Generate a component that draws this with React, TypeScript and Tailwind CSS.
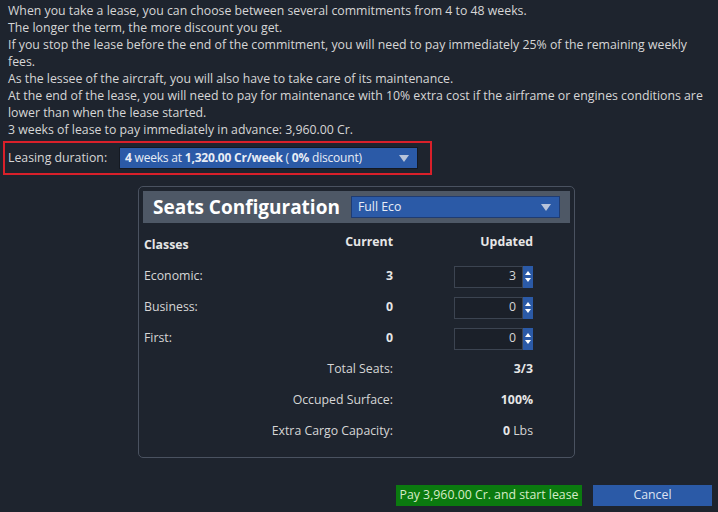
import React from "react";

const font = { fontFamily: '"Open Sans", "Noto Sans", sans-serif' };

const Arrow = () => (
  <svg width="10" height="7" viewBox="0 0 10 7" className="shrink-0">
    <path d="M0 0 L10 0 L5 7 Z" fill="#b8c4da" />
  </svg>
);

const Spinner = () => (
  <div className="flex h-full w-[10px] flex-col items-center justify-center gap-[3px] bg-[#2b5aa7]">
    <svg width="6" height="4" viewBox="0 0 6 4">
      <path d="M0 4 L6 4 L3 0 Z" fill="#ffffff" />
    </svg>
    <svg width="6" height="4" viewBox="0 0 6 4">
      <path d="M0 0 L6 0 L3 4 Z" fill="#ffffff" />
    </svg>
  </div>
);

interface SeatRowProps {
  label: string;
  current: number;
  updated: number;
}

const SeatRow: React.FC<SeatRowProps> = ({ label, current, updated }) => (
  <div className="grid h-[31px] grid-cols-[249px_61px_79px] items-center">
    <div className="flex items-center justify-between">
      <span>{label}</span>
      <span className="font-bold text-[#e6e6e6]">{current}</span>
    </div>
    <div />
    <div className="flex h-[22px] items-stretch">
      <div className="flex flex-1 items-center justify-end border border-[#3c4451] bg-[#1b2029] pr-[6px]">
        {updated}
      </div>
      <Spinner />
    </div>
  </div>
);

const SummaryRow: React.FC<{ label: string; value: React.ReactNode }> = ({ label, value }) => (
  <div className="grid h-[31px] grid-cols-[249px_61px_79px] items-center">
    <div className="text-right">{label}</div>
    <div />
    <div className="text-right">{value}</div>
  </div>
);

export default function App() {
  return (
    <div
      className="flex h-[512px] w-[718px] flex-col overflow-hidden bg-[#1e242e] text-[12.3px] text-[#d6d6d6]"
      style={font}
    >
      <div className="pl-2 pr-2 pt-[2px] leading-[17px]">
        <p>When you take a lease, you can choose between several commitments from 4 to 48 weeks.</p>
        <p>The longer the term, the more discount you get.</p>
        <p>
          If you stop the lease before the end of the commitment, you will need to pay immediately 25% of the remaining weekly
          fees.
        </p>
        <p>As the lessee of the aircraft, you will also have to take care of its maintenance.</p>
        <p>
          At the end of the lease, you will need to pay for maintenance with 10% extra cost if the airframe or engines conditions are
          lower than when the lease started.
        </p>
        <p>3 weeks of lease to pay immediately in advance: 3,960.00 Cr.</p>
      </div>

      <div className="ml-[3px] mt-[3px] flex h-[34px] w-[429px] items-center border-2 border-[#d9202a] pl-[3px]">
        <span className="w-[111px]">Leasing duration:</span>
        <div className="flex h-[22px] w-[299px] items-center justify-between border border-[#141922] bg-[#2b5aa7] pl-[5px] pr-[8px] text-[12px] tracking-[-0.2px] text-[#e8edf6]">
          <span>
            <b>4</b> weeks at <b>1,320.00 Cr/week</b> ( <b>0%</b> discount)
          </span>
          <Arrow />
        </div>
      </div>

      <div className="ml-[138px] mt-[11px] flex h-[272px] w-[437px] flex-col rounded-[5px] border border-[#4a5260] px-[4px] pt-[4px]">
        <div className="flex h-[32px] items-center bg-[#4e5866] pl-[10px] pr-[10px]">
          <span className="text-[19px] font-bold text-white">Seats Configuration</span>
          <div className="ml-[11px] flex h-[22px] flex-1 items-center justify-between border border-[#1f3c72] bg-[#2b5aa7] pl-[6px] pr-[8px] text-[#e8edf6]">
            <span>Full Eco</span>
            <Arrow />
          </div>
        </div>

        <div className="mt-[3px] pl-[1px]">
          <div className="grid h-[33px] grid-cols-[249px_61px_79px] items-center font-bold text-[#e6e6e6]">
            <div className="flex items-center justify-between">
              <span className="pt-[5px]">Classes</span>
              <span>Current</span>
            </div>
            <div />
            <div className="text-right">Updated</div>
          </div>
          <div className="mt-[2px]">
            <SeatRow label="Economic:" current={3} updated={3} />
            <SeatRow label="Business:" current={0} updated={0} />
            <SeatRow label="First:" current={0} updated={0} />
            <SummaryRow label="Total Seats:" value={<b className="text-[#e6e6e6]">3/3</b>} />
            <SummaryRow label="Occuped Surface:" value={<b className="text-[#e6e6e6]">100%</b>} />
            <SummaryRow
              label="Extra Cargo Capacity:"
              value={
                <span>
                  <b className="text-[#e6e6e6]">0</b> Lbs
                </span>
              }
            />
          </div>
        </div>
      </div>

      <div className="mt-[27px] flex justify-end gap-[11px] pr-[6px]">
        <button className="h-[21px] w-[186px] bg-[#0b7a0f] text-[#d6ecc8]">Pay 3,960.00 Cr. and start lease</button>
        <button className="h-[21px] w-[119px] bg-[#2b5aa7] text-[#dbe3f2]">Cancel</button>
      </div>
    </div>
  );
}
